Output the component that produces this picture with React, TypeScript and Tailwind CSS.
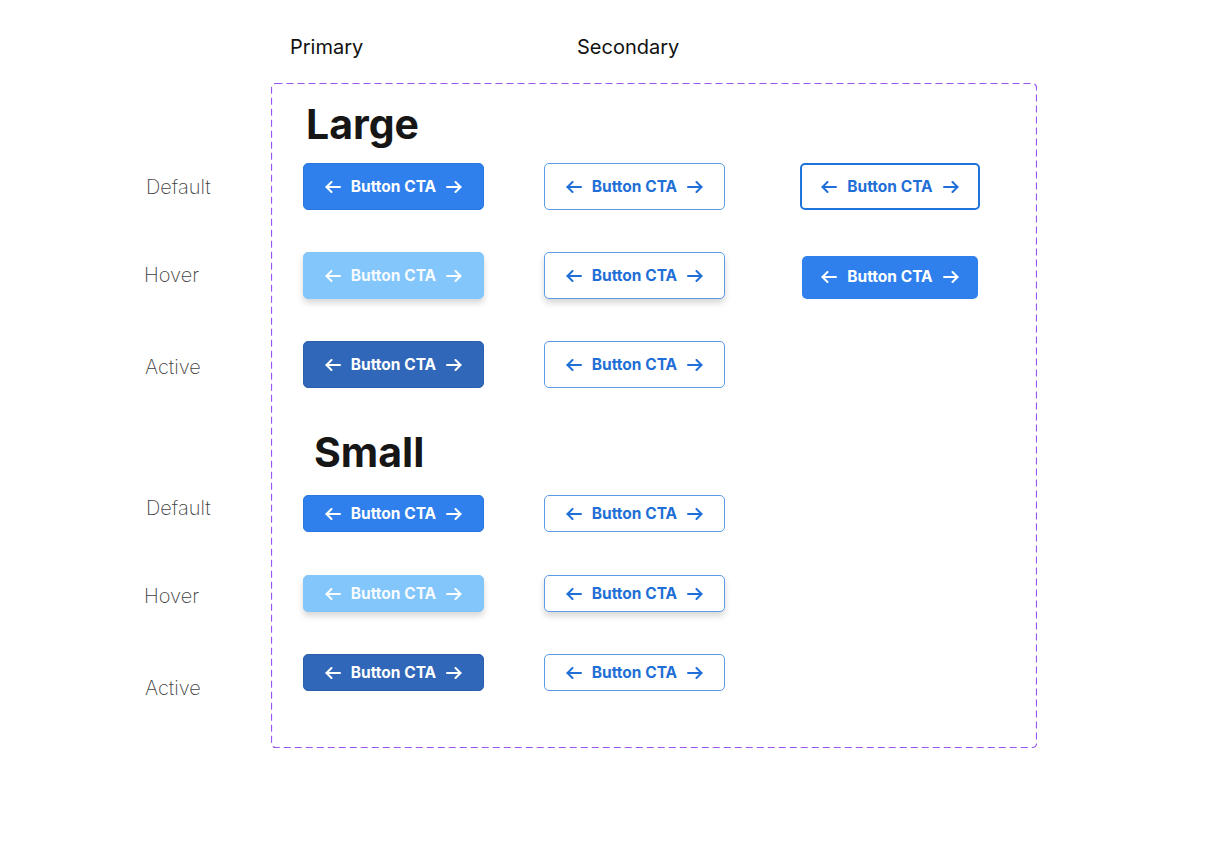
import React from "react";

const Arrow = ({ dir }: { dir: "left" | "right" }) => (
  <svg width="16" height="12" viewBox="0 0 16 12" fill="none" stroke="currentColor" strokeWidth="2" strokeLinecap="round" strokeLinejoin="round" className="shrink-0">
    {dir === "left" ? (
      <>
        <path d="M15 6H1.5" />
        <path d="M6.5 1L1.5 6l5 5" />
      </>
    ) : (
      <>
        <path d="M1 6h13.5" />
        <path d="M9.5 1l5 5-5 5" />
      </>
    )}
  </svg>
);

type Variant = "pDefault" | "pHover" | "pActive" | "sDefault" | "sHover" | "sActive" | "tDefault" | "tHover";

const variantCls: Record<Variant, string> = {
  pDefault: "bg-[#2f80ed] border border-[#2a76de] text-white",
  pHover: "bg-[#82c6fb] border border-[#82c6fb] text-white/95 shadow-[0_4px_6px_rgba(0,0,0,0.16)]",
  pActive: "bg-[#3067b9] border border-[#2b5fae] text-white",
  sDefault: "bg-white border border-[#5a9be8] text-[#1f6fd6]",
  sHover: "bg-white border border-[#5a9be8] text-[#1f6fd6] shadow-[0_4px_6px_rgba(0,0,0,0.16)]",
  sActive: "bg-white border border-[#5a9be8] text-[#1f6fd6]",
  tDefault: "bg-white border-2 border-[#1f74dc] text-[#1f6fd6]",
  tHover: "bg-[#2f80ed] text-white",
};

const Btn = ({ v, h, w = "w-[181px]" }: { v: Variant; h: string; w?: string }) => (
  <div className={`${w} ${h} ${variantCls[v]} rounded-[5px] flex items-center justify-center gap-[10px] text-[15.5px] font-bold`}>
    <Arrow dir="left" />
    <span className="leading-none">Button CTA</span>
    <Arrow dir="right" />
  </div>
);

const Label = ({ children, mt, ml }: { children: React.ReactNode; mt: string; ml: string }) => (
  <div className={`${mt} ${ml} text-[20px] leading-[24px] font-extralight text-[#3f3f3f]`}>{children}</div>
);

export default function App() {
  return (
    <div className="w-[1207px] h-[858px] bg-white overflow-hidden" style={{ fontFamily: "Inter, 'Noto Sans', sans-serif" }}>
      <div className="flex pt-[35px] text-[20px] leading-[24px] text-[#111111]">
        <div className="ml-[290px] w-[287px]">Primary</div>
        <div>Secondary</div>
      </div>
      <div className="flex mt-[24px]">
        <div className="w-[271px] flex flex-col">
          <Label mt="mt-[92px]" ml="ml-[146px]">Default</Label>
          <Label mt="mt-[64px]" ml="ml-[144px]">Hover</Label>
          <Label mt="mt-[68px]" ml="ml-[145px]">Active</Label>
          <Label mt="mt-[117px]" ml="ml-[146px]">Default</Label>
          <Label mt="mt-[64px]" ml="ml-[144px]">Hover</Label>
          <Label mt="mt-[68px]" ml="ml-[145px]">Active</Label>
        </div>
        <div className="relative w-[766px] h-[665px]">
          <svg className="absolute inset-0 pointer-events-none" width="766" height="665" fill="none">
            <rect x="0.5" y="0.5" width="765" height="664" rx="4" stroke="#9a55f0" strokeWidth="1.2" strokeDasharray="7 4" />
          </svg>
          <div className="flex flex-col pt-[17px] pl-[32px]">
            <div className="ml-[3px] text-[41px] leading-[48px] font-bold text-[#161616]">Large</div>
            <div className="mt-[15px] flex items-center gap-[60px]">
              <Btn v="pDefault" h="h-[47px]" />
              <Btn v="sDefault" h="h-[47px]" />
              <div className="ml-[15px]">
                <Btn v="tDefault" h="h-[47px]" w="w-[180px]" />
              </div>
            </div>
            <div className="mt-[42px] flex items-center gap-[60px]">
              <Btn v="pHover" h="h-[47px]" />
              <Btn v="sHover" h="h-[47px]" />
              <div className="ml-[17px] mt-[3px]">
                <Btn v="tHover" h="h-[43px]" w="w-[176px]" />
              </div>
            </div>
            <div className="mt-[42px] flex items-center gap-[60px]">
              <Btn v="pActive" h="h-[47px]" />
              <Btn v="sActive" h="h-[47px]" />
            </div>
            <div className="mt-[40px] ml-[11px] text-[41px] leading-[48px] font-bold text-[#161616]">Small</div>
            <div className="mt-[19px] flex items-center gap-[60px]">
              <Btn v="pDefault" h="h-[37px]" />
              <Btn v="sDefault" h="h-[37px]" />
            </div>
            <div className="mt-[43px] flex items-center gap-[60px]">
              <Btn v="pHover" h="h-[37px]" />
              <Btn v="sHover" h="h-[37px]" />
            </div>
            <div className="mt-[42px] flex items-center gap-[60px]">
              <Btn v="pActive" h="h-[37px]" />
              <Btn v="sActive" h="h-[37px]" />
            </div>
          </div>
        </div>
      </div>
    </div>
  );
}
